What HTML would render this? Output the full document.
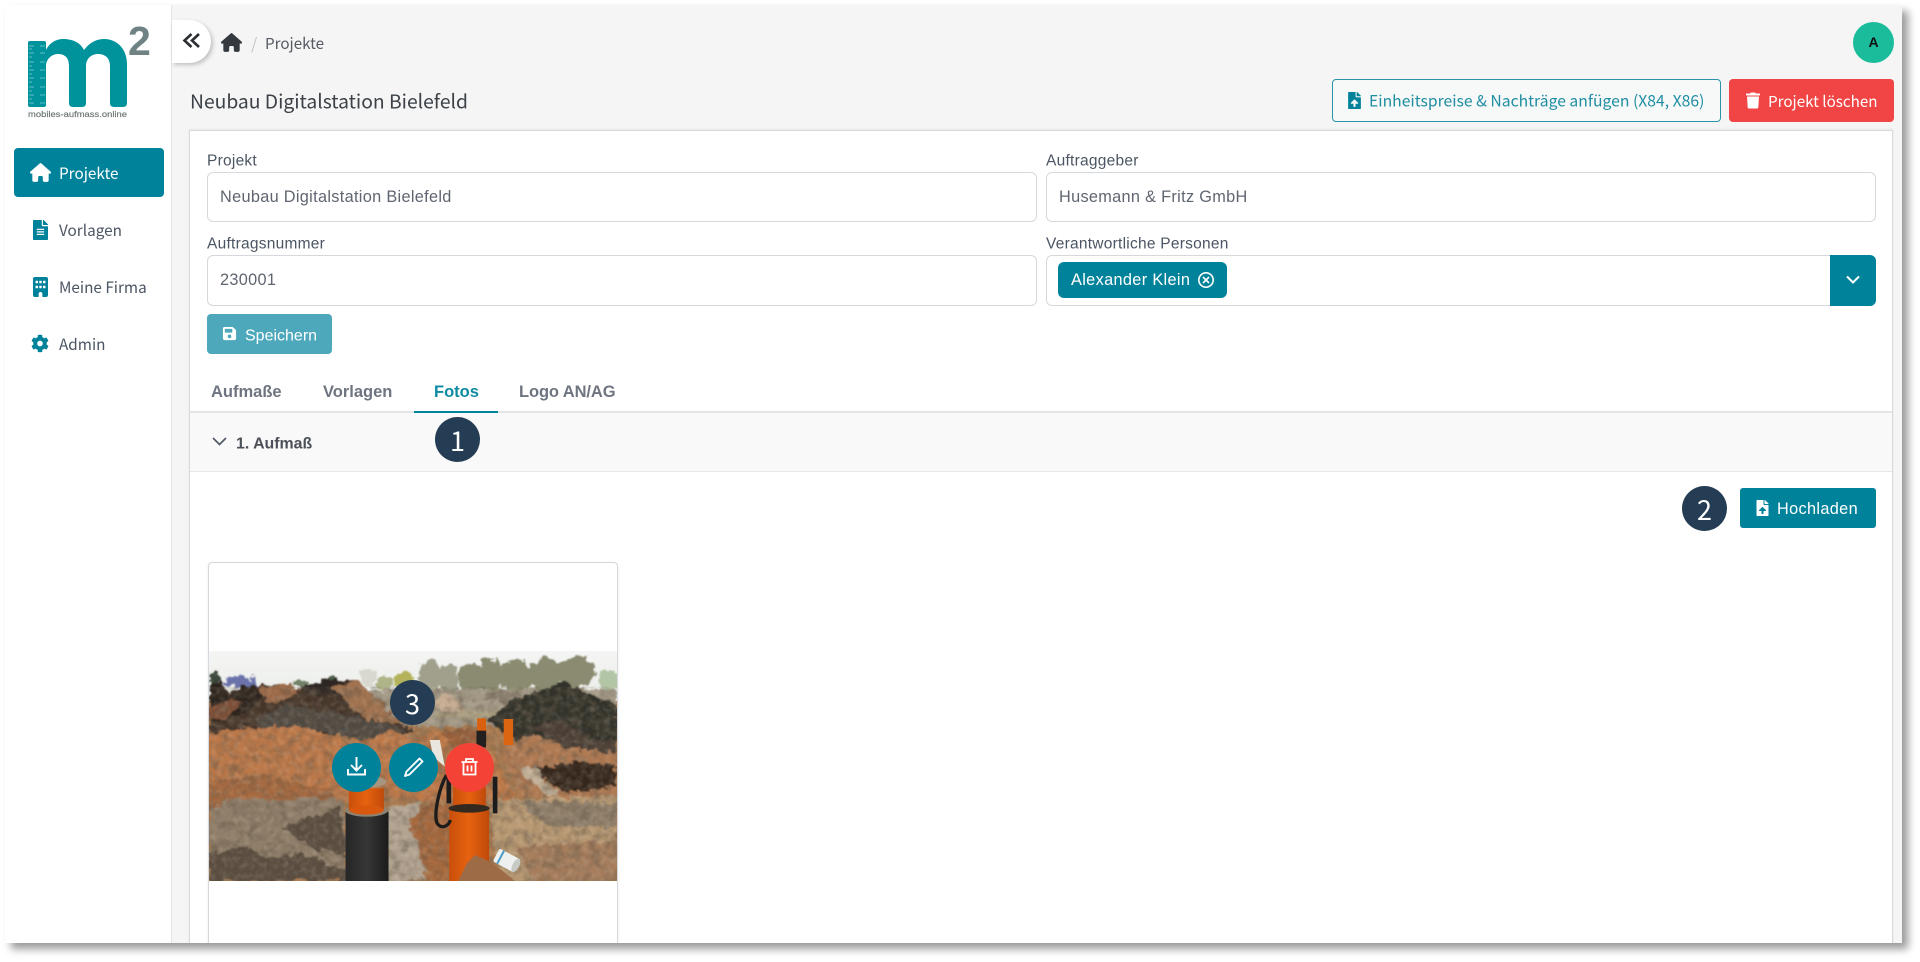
<!DOCTYPE html>
<html lang="de"><head><meta charset="utf-8"><title>Neubau Digitalstation Bielefeld</title>
<style>
html,body{margin:0;padding:0;width:1920px;height:962px;overflow:hidden;background:#fff}
*{box-sizing:border-box}
#win{position:absolute;left:5px;top:5px;width:1897px;height:938px;background:#f5f5f5;box-shadow:6px 6px 8px rgba(0,0,0,.4);overflow:hidden}
#stage{position:absolute;left:-5px;top:-5px;width:1920px;height:962px;font-family:"Liberation Sans",sans-serif}
.a{position:absolute}
.t{position:absolute;white-space:nowrap;transform:translateY(-50%);line-height:1.2}
.s{font-family:"Noto Sans CJK JP","Liberation Sans",sans-serif}
.i{position:absolute}
.inp{position:absolute;background:#fff;border:1px solid #d5d8dd;border-radius:6px}
.lab{font-size:15.5px;color:#4b5563;letter-spacing:.25px}
.val{font-size:16.3px;color:#5f6570;letter-spacing:.32px}
.nav{font-size:15.3px;color:#4b5563}
.num{position:absolute;width:45px;height:45px;border-radius:50%;background:#253d54;color:#fff;text-align:center;line-height:45px;font-size:27px;font-family:"Noto Sans CJK JP","Liberation Sans",sans-serif}
.rb{position:absolute;width:49px;height:49px;border-radius:50%;top:743px;background:#00829b}
.tab{font-size:16.5px;font-weight:700;color:#6f7580}
</style></head><body>
<div id="win"><div id="stage">

<!-- sidebar -->
<div class="a" style="left:0;top:0;width:172px;height:962px;background:#fff;border-right:1px solid #e5e5e5"></div>
<svg class="i" style="left:20px;top:15px" width="140" height="110" viewBox="20 15 140 110">
<path fill="#00939b" d="M46 43V50C50 42 57 39 63 39C72 39 80 42 84 50C90 42 97 39 104 39C118 39 127 50 127 64V103Q127 107 123 107H114Q110 107 110 103V66C110 58 105 54 98 54C91 54 86 59 86 66V103Q86 107 82 107H73Q69 107 69 103V66C69 58 65 54 58 54C51 54 46 60 46 66Z"/>
<rect x="28" y="41" width="18" height="66" rx="2" fill="#00939b"/>
<g stroke="#7fcfd2" stroke-width=".7"><path d="M29 46h5M29 49h3M29 53h5M29 57h3M29 62h5M29 66h3M29 70h5M29 74h3M29 78h5M29 82h3M29 87h5M29 91h3M29 95h5M29 99h3M29 103h5"/><path d="M45 46h-5M45 53h-5M45 62h-5M45 70h-5M45 78h-5M45 87h-5M45 95h-5M45 103h-5"/></g>
<text x="128" y="55" font-family="Liberation Sans" font-weight="700" font-size="41" fill="#6f8385">2</text>
<text x="28" y="117" font-family="Liberation Sans" font-size="8.6" fill="#6a7474" stroke="#6a7474" stroke-width=".15" textLength="99" lengthAdjust="spacingAndGlyphs">mobiles-aufmass.online</text>
</svg>

<div class="a" style="left:14px;top:148px;width:150px;height:49px;background:#00829b;border-radius:4px"></div>
<svg class="i" style="left:30px;top:163px" width="21" height="19" viewBox="0 0 576 512"><path fill="#fff" d="M575.800 255.500c0 18-15 32.100-32 32.100h-32l.7 160.200c0 2.700-.2 5.400-.5 8.100V472c0 22.100-17.900 40-40 40H456c-1.100 0-2.200 0-3.300-.1c-1.400 .1-2.800 .1-4.200 .1H416 392c-22.100 0-40-17.900-40-40V448 384c0-17.700-14.300-32-32-32H256c-17.700 0-32 14.300-32 32v64 24c0 22.100-17.900 40-40 40H160 128.100c-1.500 0-3-.1-4.500-.2c-1.200 .1-2.400 .2-3.600 .2H104c-22.100 0-40-17.900-40-40V360c0-.9 0-1.900 .1-2.800V287.600H32c-18 0-32-14-32-32.100c0-9 3-17 10-24L266.400 8c7-7 15-8 22-8s15 2 21 7L564.800 231.500c8 7 12 15 11 24z"/></svg>
<span class="t s nav" style="left:59px;top:173px;color:#fff">Projekte</span>
<svg class="i" style="left:33px;top:220px" width="15" height="20" viewBox="0 0 384 512"><path fill="#00829b" d="M224 136V0H24C10.700 0 0 10.700 0 24v464c0 13.300 10.700 24 24 24h336c13.300 0 24-10.700 24-24V160H248c-13.200 0-24-10.800-24-24zm64 236c0 6.600-5.400 12-12 12H108c-6.600 0-12-5.400-12-12v-8c0-6.600 5.400-12 12-12h168c6.600 0 12 5.400 12 12v8zm0-64c0 6.600-5.400 12-12 12H108c-6.600 0-12-5.400-12-12v-8c0-6.600 5.400-12 12-12h168c6.600 0 12 5.400 12 12v8zm0-72v8c0 6.600-5.400 12-12 12H108c-6.600 0-12-5.400-12-12v-8c0-6.600 5.400-12 12-12h168c6.600 0 12 5.400 12 12zm96-114.100v6.100H256V0h6.100c6.400 0 12.500 2.500 17 7l97.900 98c4.500 4.500 7 10.600 7 16.900z"/></svg>
<span class="t s nav" style="left:59px;top:230px">Vorlagen</span>
<svg class="i" style="left:33px;top:277px" width="15" height="20" viewBox="0 0 384 512"><path fill="#00829b" d="M48 0C21.500 0 0 21.500 0 48V464c0 26.500 21.500 48 48 48h96V432c0-26.500 21.500-48 48-48s48 21.500 48 48v80h96c26.500 0 48-21.500 48-48V48c0-26.500-21.500-48-48-48H48zM64 240c0-8.800 7.200-16 16-16h32c8.800 0 16 7.200 16 16v32c0 8.800-7.200 16-16 16H80c-8.800 0-16-7.200-16-16V240zm112-16h32c8.800 0 16 7.200 16 16v32c0 8.800-7.200 16-16 16H176c-8.800 0-16-7.200-16-16V240c0-8.800 7.200-16 16-16zm80 16c0-8.800 7.200-16 16-16h32c8.800 0 16 7.200 16 16v32c0 8.800-7.200 16-16 16H272c-8.800 0-16-7.200-16-16V240zM80 96h32c8.800 0 16 7.200 16 16v32c0 8.800-7.200 16-16 16H80c-8.800 0-16-7.200-16-16V112c0-8.800 7.200-16 16-16zm80 16c0-8.800 7.200-16 16-16h32c8.800 0 16 7.200 16 16v32c0 8.800-7.200 16-16 16H176c-8.800 0-16-7.200-16-16V112zM272 96h32c8.800 0 16 7.200 16 16v32c0 8.800-7.200 16-16 16H272c-8.800 0-16-7.200-16-16V112c0-8.800 7.200-16 16-16z"/></svg>
<span class="t s nav" style="left:59px;top:287px">Meine Firma</span>
<svg class="i" style="left:31px;top:334px" width="18" height="19" viewBox="0 0 512 512"><path fill="#00829b" d="M487.400 315.700l-42.600-24.600c4.300-23.200 4.300-47 0-70.200l42.600-24.600c4.900-2.800 7.100-8.600 5.500-14-11.100-35.600-30-67.800-54.700-94.600-3.800-4.100-10-5.100-14.800-2.300L380.800 110c-17.900-15.400-38.500-27.300-60.800-35.100V25.800c0-5.600-3.900-10.500-9.400-11.700-36.700-8.200-74.300-7.800-109.200 0-5.500 1.200-9.400 6.100-9.400 11.700V75c-22.200 7.900-42.800 19.800-60.800 35.100L88.700 85.500c-4.900-2.800-11-1.900-14.800 2.300-24.700 26.700-43.600 58.900-54.700 94.600-1.700 5.400.6 11.200 5.500 14L67.300 221c-4.300 23.200-4.300 47 0 70.200l-42.600 24.600c-4.900 2.800-7.100 8.600-5.500 14 11.100 35.600 30 67.800 54.700 94.600 3.800 4.100 10 5.100 14.800 2.300l42.600-24.600c17.900 15.400 38.500 27.300 60.800 35.100v49.200c0 5.600 3.900 10.500 9.400 11.700 36.700 8.200 74.300 7.800 109.200 0 5.500-1.200 9.400-6.100 9.400-11.700v-49.200c22.200-7.900 42.800-19.800 60.800-35.100l42.600 24.600c4.900 2.800 11 1.900 14.800-2.300 24.700-26.700 43.600-58.900 54.700-94.600 1.500-5.500-.7-11.300-5.600-14.100zM256 336c-44.100 0-80-35.900-80-80s35.900-80 80-80 80 35.900 80 80-35.900 80-80 80z"/></svg>
<span class="t s nav" style="left:59px;top:344px">Admin</span>

<!-- top bar -->
<div class="a" style="left:172px;top:20px;width:39px;height:43px;background:#fff;border-radius:0 22px 22px 0;box-shadow:2px 2px 4px rgba(0,0,0,.22)"></div>
<svg class="i" style="left:182px;top:32px" width="19" height="18" viewBox="0 0 19 18"><path d="M9.500 2 2.500 8.500 9.500 15M17 2 10 8.500 17 15" fill="none" stroke="#2b2f33" stroke-width="2.600"/></svg>
<svg class="i" style="left:221px;top:33px" width="21" height="19" viewBox="0 0 576 512"><path fill="#343a40" d="M575.800 255.500c0 18-15 32.100-32 32.100h-32l.7 160.200c0 2.700-.2 5.400-.5 8.100V472c0 22.100-17.900 40-40 40H456c-1.100 0-2.200 0-3.300-.1c-1.400 .1-2.800 .1-4.200 .1H416 392c-22.100 0-40-17.900-40-40V448 384c0-17.700-14.300-32-32-32H256c-17.700 0-32 14.300-32 32v64 24c0 22.100-17.900 40-40 40H160 128.100c-1.500 0-3-.1-4.500-.2c-1.200 .1-2.400 .2-3.600 .2H104c-22.100 0-40-17.900-40-40V360c0-.9 0-1.900 .1-2.800V287.600H32c-18 0-32-14-32-32.100c0-9 3-17 10-24L266.400 8c7-7 15-8 22-8s15 2 21 7L564.800 231.500c8 7 12 15 11 24z"/></svg>
<span class="t s" style="left:251px;top:43px;font-size:16px;color:#c2c5c8">/</span>
<span class="t s" style="left:265px;top:42.500px;font-size:15.200px;color:#555b63">Projekte</span>
<div class="a" style="left:1853px;top:22px;width:41px;height:41px;border-radius:50%;background:#1abc9c;color:#111;font-size:14px;text-align:center;line-height:41px;font-weight:700" >A</div>

<span class="t s" style="left:190px;top:101px;font-size:19.300px;color:#3c4148">Neubau Digitalstation Bielefeld</span>

<div class="a" style="left:1332px;top:79px;width:389px;height:43px;border:1.500px solid #2a95a9;border-radius:4px;background:#f7f8f8"></div>
<svg class="i" style="left:1348px;top:92px" width="13" height="17" viewBox="0 0 384 512"><path fill="#00829b" d="M224 136V0H24C10.700 0 0 10.700 0 24v464c0 13.300 10.700 24 24 24h336c13.300 0 24-10.700 24-24V160H248c-13.200 0-24-10.800-24-24zm65.180 216.010H224v80c0 8.840-7.160 16-16 16h-32c-8.840 0-16-7.160-16-16v-80H94.820c-14.280 0-21.410-17.290-11.270-27.360l96.420-95.700c6.650-6.610 17.390-6.610 24.040 0l96.420 95.700c10.150 10.070 3.030 27.360-11.250 27.360zM377 105L279.100 7c-4.500-4.500-10.600-7-17-7H256v128h128v-6.100c0-6.300-2.500-12.400-7-16.900z"/></svg>
<span class="t s" style="left:1369px;top:101px;font-size:15.720px;color:#1f8ea3">Einheitspreise &amp; Nachträge anfügen (X84, X86)</span>
<div class="a" style="left:1729px;top:79px;width:165px;height:43px;background:#f14444;border-radius:4px"></div>
<svg class="i" style="left:1746px;top:92px" width="14" height="17" viewBox="0 0 448 512"><path fill="#fff" d="M432 32H312l-9.400-18.700A24 24 0 0 0 281.100 0H166.800a23.720 23.720 0 0 0-21.400 13.300L136 32H16A16 16 0 0 0 0 48v32a16 16 0 0 0 16 16h416a16 16 0 0 0 16-16V48a16 16 0 0 0-16-16zM53.200 467a48 48 0 0 0 47.900 45h245.800a48 48 0 0 0 47.900-45L416 128H32z"/></svg>
<span class="t s" style="left:1768px;top:101px;font-size:15.200px;color:#fff">Projekt löschen</span>

<!-- panel -->
<div class="a" style="left:189px;top:130px;width:1704px;height:840px;background:#fff;border:1px solid #d9dadc;box-shadow:0 -1px 2px rgba(0,0,0,.06)"></div>

<span class="t lab" style="left:207px;top:162px">Projekt</span>
<div class="inp" style="left:207px;top:172px;width:830px;height:50px"></div>
<span class="t val" style="left:220px;top:198px">Neubau Digitalstation Bielefeld</span>
<span class="t lab" style="left:1046px;top:162px">Auftraggeber</span>
<div class="inp" style="left:1046px;top:172px;width:830px;height:50px"></div>
<span class="t val" style="left:1059px;top:198px">Husemann &amp; Fritz GmbH</span>
<span class="t lab" style="left:207px;top:245px">Auftragsnummer</span>
<div class="inp" style="left:207px;top:255px;width:830px;height:51px"></div>
<span class="t val" style="left:220px;top:281px">230001</span>
<span class="t lab" style="left:1046px;top:245px">Verantwortliche Personen</span>
<div class="inp" style="left:1046px;top:255px;width:830px;height:51px"></div>
<div class="a" style="left:1830px;top:255px;width:46px;height:51px;background:#00829b;border-radius:0 6px 6px 0"></div>
<svg class="i" style="left:1845px;top:273px" width="16" height="14" viewBox="0 0 16 14"><path d="M2 3.500 8 9.500 14 3.500" fill="none" stroke="#fff" stroke-width="2"/></svg>
<div class="a" style="left:1058px;top:262px;width:169px;height:36px;background:#00829b;border-radius:6px"></div>
<span class="t" style="left:1071px;top:281px;font-size:16.300px;color:#fff;letter-spacing:.35px">Alexander Klein</span>
<svg class="i" style="left:1197px;top:271px" width="18" height="18" viewBox="0 0 18 18"><circle cx="9" cy="9" r="7.200" fill="none" stroke="#fff" stroke-width="1.600"/><path d="M6 6l6 6M12 6l-6 6" stroke="#fff" stroke-width="1.600"/></svg>

<div class="a" style="left:207px;top:314px;width:125px;height:40px;background:#4ea8bb;border-radius:4px"></div>
<svg class="i" style="left:222px;top:326px" width="15" height="15" viewBox="0 0 448 512"><path fill="#fff" d="M433.941 129.941l-83.882-83.882A48 48 0 0 0 316.118 32H48C21.490 32 0 53.490 0 80v352c0 26.510 21.490 48 48 48h352c26.510 0 48-21.490 48-48V163.882a48 48 0 0 0-14.059-33.941zM224 416c-35.346 0-64-28.654-64-64 0-35.346 28.654-64 64-64s64 28.654 64 64c0 35.346-28.654 64-64 64zm96-304.520V212c0 6.627-5.373 12-12 12H76c-6.627 0-12-5.373-12-12V108c0-6.627 5.373-12 12-12h228.520c3.183 0 6.235 1.264 8.485 3.515l3.480 3.480A11.996 11.996 0 0 1 320 111.480z"/></svg>
<span class="t" style="left:245px;top:336px;font-size:16px;color:#fff">Speichern</span>

<!-- tabs -->
<span class="t tab" style="left:211px;top:392.500px">Aufmaße</span>
<span class="t tab" style="left:323px;top:392.500px">Vorlagen</span>
<span class="t tab" style="left:434px;top:392.500px;color:#0d8ba3">Fotos</span>
<span class="t tab" style="left:519px;top:392.500px;letter-spacing:-.1px">Logo AN/AG</span>
<div class="a" style="left:190px;top:411px;width:1702px;height:2px;background:#e3e5e8"></div>
<div class="a" style="left:414px;top:411px;width:84px;height:2px;background:#00829b"></div>
<div class="a" style="left:190px;top:413px;width:1702px;height:59px;background:#f9f9fa;border-bottom:1px solid #e5e7eb"></div>
<svg class="i" style="left:211px;top:434px" width="17" height="15" viewBox="0 0 17 15"><path d="M2 4 8.500 10.500 15 4" fill="none" stroke="#4b5563" stroke-width="1.600"/></svg>
<span class="t" style="left:236px;top:443.500px;font-size:15.900px;font-weight:700;color:#4b5058">1. Aufmaß</span>
<div class="num" style="left:435px;top:417px">1</div>

<div class="num" style="left:1682px;top:486px">2</div>
<div class="a" style="left:1740px;top:488px;width:136px;height:40px;background:#00829b;border-radius:3px"></div>
<svg class="i" style="left:1756px;top:500px" width="13" height="16" viewBox="0 0 384 512"><path fill="#fff" d="M224 136V0H24C10.700 0 0 10.700 0 24v464c0 13.300 10.700 24 24 24h336c13.300 0 24-10.700 24-24V160H248c-13.200 0-24-10.800-24-24zm65.180 216.010H224v80c0 8.840-7.160 16-16 16h-32c-8.840 0-16-7.160-16-16v-80H94.820c-14.280 0-21.410-17.290-11.270-27.360l96.420-95.700c6.650-6.610 17.390-6.610 24.040 0l96.420 95.700c10.150 10.070 3.030 27.360-11.250 27.360zM377 105L279.100 7c-4.500-4.500-10.600-7-17-7H256v128h128v-6.100c0-6.300-2.500-12.400-7-16.900z"/></svg>
<span class="t" style="left:1777px;top:510px;font-size:16.300px;color:#fff;letter-spacing:.35px">Hochladen</span>

<!-- card -->
<div class="a" style="left:208px;top:562px;width:410px;height:420px;background:#fff;border:1px solid #d5d8dd;border-radius:4px;box-shadow:0 1px 3px rgba(0,0,0,.08)"></div>

<svg class="i" style="left:209px;top:651px" width="408" height="230" viewBox="27 33 1225 690" preserveAspectRatio="none">
<defs>
<linearGradient id="sky" x1="0" y1="0" x2="0" y2="1"><stop offset="0" stop-color="#f4f5f4"/><stop offset="1" stop-color="#eceee9"/></linearGradient>
<linearGradient id="pp" x1="0" y1="0" x2="1" y2="0"><stop offset="0" stop-color="#c94f0c"/><stop offset=".5" stop-color="#e6620f"/><stop offset="1" stop-color="#c0490a"/></linearGradient>
<linearGradient id="bp" x1="0" y1="0" x2="1" y2="0"><stop offset="0" stop-color="#262626"/><stop offset=".5" stop-color="#363636"/><stop offset="1" stop-color="#1b1b1b"/></linearGradient>
<filter id="n" x="0" y="0" width="100%" height="100%"><feTurbulence type="fractalNoise" baseFrequency=".035" numOctaves="4" seed="7"/><feColorMatrix values="0 0 0 0 .12  0 0 0 0 .09  0 0 0 0 .06  2.400 0 0 0 -.95"/><feGaussianBlur stdDeviation="1.500"/></filter>
<filter id="n2" x="0" y="0" width="100%" height="100%"><feTurbulence type="fractalNoise" baseFrequency=".06" numOctaves="3" seed="21"/><feColorMatrix values="0 0 0 0 1  0 0 0 0 .88  0 0 0 0 .72  0 2.200 0 0 -.95"/><feGaussianBlur stdDeviation="1.500"/></filter>
<filter id="b" x="-5%" y="-5%" width="110%" height="110%"><feTurbulence type="fractalNoise" baseFrequency=".045" numOctaves="3" seed="3" result="w"/><feDisplacementMap in="SourceGraphic" in2="w" scale="34" xChannelSelector="R" yChannelSelector="G"/><feGaussianBlur stdDeviation="2.500"/></filter>
</defs>
<rect x="27" y="33" width="1225" height="690" fill="#a8794f"/>
<rect x="27" y="33" width="1225" height="150" fill="url(#sky)"/>
<g filter="url(#b)">
<g fill="#a0a08c"><ellipse cx="690" cy="110" rx="35" ry="50"/><ellipse cx="745" cy="115" rx="30" ry="45"/></g>
<g fill="#8a8b70"><ellipse cx="810" cy="115" rx="35" ry="48"/><ellipse cx="870" cy="110" rx="40" ry="52"/><ellipse cx="950" cy="110" rx="50" ry="50"/><ellipse cx="1040" cy="105" rx="50" ry="52"/><ellipse cx="1130" cy="95" rx="55" ry="48"/></g>
<ellipse cx="1228" cy="122" rx="30" ry="30" fill="#b2c5a4"/>
<ellipse cx="505" cy="112" rx="26" ry="26" fill="#d8d8ce"/><ellipse cx="555" cy="130" rx="26" ry="20" fill="#aeb487"/><ellipse cx="612" cy="120" rx="30" ry="26" fill="#b4b25a"/>
<ellipse cx="42" cy="115" rx="16" ry="18" fill="#3c4a3c"/><ellipse cx="300" cy="130" rx="22" ry="8" fill="#6f8065"/><ellipse cx="395" cy="115" rx="12" ry="12" fill="#4c5a4a"/>
<polygon points="65,128 82,110 155,110 172,142 70,135" fill="#6c73ab"/>
<polygon points="500,150 1252,150 1252,260 500,260" fill="#a39987"/>
<polygon points="690,205 730,160 770,175 800,215" fill="#c6ad93"/>
<polygon points="850,175 905,145 960,170 930,190" fill="#8a7f70"/>
<polygon points="700,215 940,210 900,240 720,235" fill="#ab9f82"/>
<polygon points="27,130 60,125 90,165 130,135 170,140 260,130 300,148 410,115 470,125 530,175 640,280 27,290" fill="#453529"/>
<polygon points="27,130 60,125 85,170 125,135 170,145 195,165 150,210 90,235 27,250" fill="#2b211a"/>
<polygon points="175,150 260,130 300,150 215,195" fill="#9c6b48"/>
<polygon points="300,140 410,115 450,130 430,165 350,170" fill="#2e2822"/>
<polygon points="395,140 470,125 530,175 610,255 500,240 440,185" fill="#a0724f"/>
<polygon points="160,245 255,195 360,210 470,232 620,272 500,305 430,285 290,262 170,272" fill="#4f4942"/>
<polygon points="27,200 90,180 130,190 80,235 27,245" fill="#7d5038"/>
<polygon points="860,245 950,172 1100,125 1180,170 1252,190 1252,430 1040,345" fill="#33302c"/>
<polygon points="1000,260 1080,235 1180,300 1252,300 1252,350 1100,330" fill="#4a3e34"/>
<polygon points="900,330 1000,280 1090,320 1252,340 1252,480 960,470" fill="#b07a52"/>
<polygon points="1000,385 1120,365 1245,372 1252,440 1090,462" fill="#35261a"/>
<polygon points="960,385 1000,380 1080,465 1040,470" fill="#bfae95"/>
<polygon points="27,282 150,265 300,258 430,300 500,298 570,270 640,300 740,270 840,285 880,340 950,480 400,480 27,500" fill="#bb784a"/>
<polygon points="27,420 200,410 400,450 430,482 27,500" fill="#a4693f"/>
<polygon points="720,275 790,262 830,285 870,340 760,320" fill="#99603b"/>
<polygon points="27,500 100,480 430,478 445,723 27,723" fill="#8f7e69"/>
<polygon points="27,640 140,620 210,660 300,640 440,690 440,723 27,723" fill="#5a4e41"/>
<polygon points="250,560 420,500 440,650 330,620" fill="#5a4d40"/>
<polygon points="560,500 660,488 640,560 680,723 560,723" fill="#b2a491"/>
<polygon points="628,545 680,488 760,500 752,723 690,723" fill="#a5683e"/>
<polygon points="865,480 1252,468 1252,723 900,723" fill="#b79872"/>
<polygon points="950,480 1252,490 1252,560 1050,560" fill="#8f7f6a"/>
<polygon points="950,620 1252,600 1252,723 1000,723" fill="#a57d5c"/>
</g>
<rect x="27" y="140" width="1225" height="583" filter="url(#n)" opacity=".5"/>
<rect x="27" y="140" width="1225" height="583" filter="url(#n2)" opacity=".16"/>
<!-- pipes -->
<rect x="832" y="235" width="27" height="55" fill="#d9600f"/><rect x="830" y="272" width="29" height="50" fill="#23201f"/><rect x="912" y="237" width="28" height="78" fill="#dc6512"/>
<polygon points="690,300 720,300 735,380 700,350" fill="#e9e6de"/>
<rect x="437" y="515" width="129" height="208" fill="url(#bp)"/>
<ellipse cx="500" cy="512" rx="64" ry="18" fill="#8d8272"/>
<rect x="447" y="445" width="105" height="65" fill="url(#pp)"/><ellipse cx="500" cy="510" rx="52" ry="14" fill="#d9580d"/>
<ellipse cx="500" cy="425" rx="60" ry="18" fill="#a8957f"/>
<rect x="748" y="510" width="120" height="213" fill="url(#pp)"/>
<rect x="760" y="440" width="98" height="62" fill="url(#pp)"/>
<ellipse cx="808" cy="505" rx="62" ry="13" fill="#33291f"/>
<path d="M740 405C720 440 700 520 712 550C725 568 745 560 752 540" fill="none" stroke="#1c1c1c" stroke-width="10"/>
<path d="M747 410V490" stroke="#1c1c1c" stroke-width="14"/><path d="M886 410V520" stroke="#1c1c1c" stroke-width="14"/>
<polygon points="775,723 800,672 825,645 860,660 905,690 945,723" fill="#9e6b47"/>
<g transform="rotate(28 922 662)"><rect x="885" y="640" width="70" height="44" rx="6" fill="#eef0f0"/><rect x="897" y="640" width="6" height="44" fill="#4d9ac9"/><ellipse cx="952" cy="662" rx="10" ry="22" fill="#c8cac6"/></g>
</svg>

<div class="num" style="left:390px;top:680px">3</div>
<div class="rb" style="left:332px">
<svg width="49" height="49" viewBox="0 0 49 49"><path d="M24.500 14V27M19 22l5.500 5.500L30 22M16 26v5.500h17V26" fill="none" stroke="#fff" stroke-width="1.900"/></svg></div>
<div class="rb" style="left:389px">
<svg width="49" height="49" viewBox="0 0 49 49"><path d="M30.500 15.500l3 3-13 13-4.500 1.500 1.500-4.500z" fill="none" stroke="#fff" stroke-width="1.900" stroke-linejoin="round"/></svg></div>
<div class="rb" style="left:445px;background:#f44336">
<svg width="49" height="49" viewBox="0 0 49 49"><path d="M16.500 19h16M21 19v-3h7v3M18.500 19v12.500h12V19M22.500 22.500v6M26.500 22.500v6" fill="none" stroke="#fff" stroke-width="1.800"/></svg></div>

</div></div>
</body></html>
